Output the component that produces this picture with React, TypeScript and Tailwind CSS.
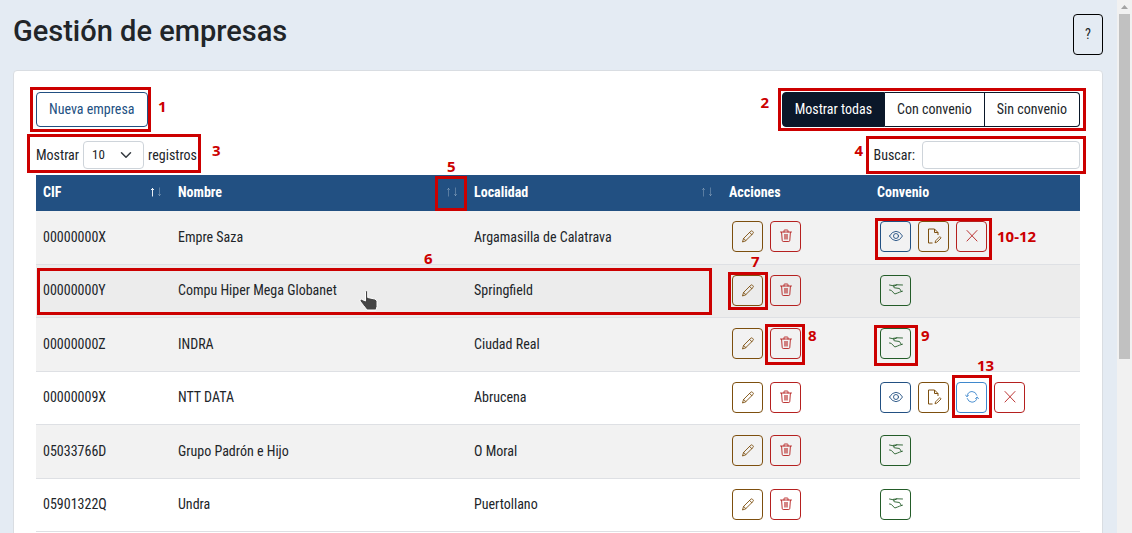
import type { ReactNode } from "react";

type IconProps = { children: ReactNode };

function Icon({ children }: IconProps) {
  return (
    <svg
      viewBox="0 0 14 14"
      className="h-[14px] w-[14px]"
      fill="none"
      stroke="currentColor"
      strokeWidth=".9"
      strokeLinecap="round"
      strokeLinejoin="round"
      aria-hidden="true"
    >
      {children}
    </svg>
  );
}

const PencilIcon = () => (
  <Icon>
    <path d="M1.600 12.600 2.600 9.400 9.800 2.200Q10.600 1.500 11.400 2.200L12.100 2.900Q12.800 3.700 12 4.500L4.800 11.600ZM8.600 3.400l2.200 2.300M2.600 9.400l2.200 2.200" />
  </Icon>
);

const TrashIcon = () => (
  <Icon>
    <path d="M1.500 3h11M5 3V1.700Q5 1 5.600 1h2.800q.6 0 .6.700V3M2.600 3.400l.6 8q.1 1.100 1 1.100h5.600q.9 0 1-1.100l.6-8" />
    <path d="M5 5h4v5.500H5Z" fill="currentColor" fillOpacity=".55" stroke="none" />
  </Icon>
);

const EyeIcon = () => (
  <Icon>
    <path d="M.5 7Q3.200 2.300 7 2.300t6.500 4.700Q10.800 11.700 7 11.700T.5 7Z" />
    <circle cx="7" cy="7" r="2.500" />
  </Icon>
);

const FileIcon = () => (
  <svg viewBox="0 0 16 16" className="h-4 w-4" fill="none" stroke="currentColor" aria-hidden="true">
    <path d="M6.500 15H2.500V1H8.500l3.500 3.500V7M8.500 1v3.500H12" />
    <path d="M9 14.800l.6-2 4.200-4.200 1.300 1.300-4.200 4.200Z" strokeWidth=".9" />
  </svg>
);

const CloseIcon = () => (
  <Icon>
    <path d="m2 1.500 10 10.500M12 1.500 2 12" />
  </Icon>
);

const HandshakeIcon = () => (
  <Icon>
    <path d="M.5 2 4.800 2.900M4.500 2.300 8 1.800 13.500 2M7.800 1.800 4.500 3.600Q4.800 5.300 7 5L10.500 5.500 12.300 8.300M.5 7 2.200 7.300 5.800 11 8.500 10 10.500 9.200 13.500 8.200" />
  </Icon>
);

const RefreshIcon = () => (
  <Icon>
    <path d="M2 6.200Q2.500 1.800 7 1.500q3.700.1 4.800 3.700M12.200 7.500Q11.500 12 7 12.200 3.300 12 2.200 8.500M.5 5.200l1.500 1.500 1.600-1.500M10.500 8.500l1.600-1.500 1.500 1.500" />
  </Icon>
);

const iconButton = "flex h-[31px] w-[31px] items-center justify-center rounded border pb-px";

const kinds = {
  edit: { label: "Editar", tone: "border-[#7d4f0e] text-[#7d4f0e]", icon: <PencilIcon /> },
  remove: { label: "Eliminar", tone: "border-[#b5201f] text-[#b5201f]", icon: <TrashIcon /> },
  view: { label: "Ver convenio", tone: "border-[#225082] text-[#225082]", icon: <EyeIcon /> },
  file: { label: "Editar convenio", tone: "border-[#7d4f0e] text-[#7d4f0e]", icon: <FileIcon /> },
  cancel: { label: "Eliminar convenio", tone: "border-[#b5201f] text-[#b5201f]", icon: <CloseIcon /> },
  sign: { label: "Nuevo convenio", tone: "border-[#235c28] text-[#235c28]", icon: <HandshakeIcon /> },
  renew: { label: "Renovar convenio", tone: "border-[#3f88cd] text-[#3f88cd]", icon: <RefreshIcon /> },
};

type Kind = keyof typeof kinds;

function Actions({ items }: { items: Kind[] }) {
  return (
    <div className="flex gap-[7px] pl-[3px]">
      {items.map((k) => (
        <button key={k} type="button" aria-label={kinds[k].label} className={`${iconButton} ${kinds[k].tone}`}>
          {kinds[k].icon}
        </button>
      ))}
    </div>
  );
}

const companies: { cif: string; name: string; town: string; bg: string; deal: Kind[] }[] = [
  { cif: "00000000X", name: "Empre Saza", town: "Argamasilla de Calatrava", bg: "bg-[#f2f2f2]", deal: ["view", "file", "cancel"] },
  { cif: "00000000Y", name: "Compu Hiper Mega Globanet", town: "Springfield", bg: "bg-[#ececec]", deal: ["sign"] },
  { cif: "00000000Z", name: "INDRA", town: "Ciudad Real", bg: "bg-[#f2f2f2]", deal: ["sign"] },
  { cif: "00000009X", name: "NTT DATA", town: "Abrucena", bg: "bg-white", deal: ["view", "file", "renew", "cancel"] },
  { cif: "05033766D", name: "Grupo Padrón e Hijo", town: "O Moral", bg: "bg-[#f2f2f2]", deal: ["sign"] },
  { cif: "05901322Q", name: "Undra", town: "Puertollano", bg: "bg-white", deal: ["sign"] },
];

function SortHeader({ label, active = false }: { label: string; active?: boolean }) {
  return (
    <th className="px-[7px] pb-[3px] font-bold">
      <button type="button" className="flex w-full items-center justify-between">
        {label}
        <svg viewBox="0 0 14 10" className="h-[10px] w-[14px]" fill="none" stroke="currentColor" aria-hidden="true">
          <path d="M2.500 9.500V1M1 3l1.500-1.500L4 3" opacity={active ? 0.9 : 0.25} />
          <path d="M9.500.5V9M8 7l1.500 1.500L11 7" opacity=".25" />
        </svg>
      </button>
    </th>
  );
}

const boxes = [
  "left-[30px] top-[87px] h-[45px] w-[121px]",
  "right-[31px] top-[88px] h-[43px] w-[308px]",
  "left-[27px] top-[134px] h-[39px] w-[174px]",
  "right-[31px] top-[136px] h-[38px] w-[220px]",
  "left-[435px] top-[176px] h-[35px] w-[32px]",
  "left-[37px] top-[268px] h-[47px] w-[675px]",
  "left-[728px] top-[272px] h-[38px] w-[40px]",
  "left-[765px] top-[324px] h-[41px] w-[40px]",
  "left-[874px] top-[325px] h-[41px] w-[44px]",
  "left-[875px] top-[218px] h-[42px] w-[117px]",
  "left-[952px] top-[375px] h-[43px] w-[40px]",
];

const marks = [
  { text: "1", at: "left-[158px] top-[96px]" },
  { text: "2", at: "right-[348px] top-[92px]" },
  { text: "3", at: "left-[212px] top-[140px]" },
  { text: "4", at: "right-[254px] top-[140px]" },
  { text: "5", at: "left-[447px] top-[156px]" },
  { text: "6", at: "left-[424px] top-[248px]" },
  { text: "7", at: "left-[751px] top-[251px]" },
  { text: "8", at: "left-[808px] top-[325px]" },
  { text: "9", at: "left-[921px] top-[325px]" },
  { text: "10-12", at: "left-[997px] top-[226px]" },
  { text: "13", at: "left-[977px] top-[355px]" },
];

function Annotations() {
  return (
    <div className="pointer-events-none absolute inset-0">
      {boxes.map((b) => (
        <span key={b} className={`absolute border-3 border-[#cc0000] ${b}`} />
      ))}
      {marks.map((m) => (
        <span
          key={m.text}
          className={`absolute font-['Noto_Sans',sans-serif] text-[15px] leading-5 font-bold text-[#cc0000] ${m.at}`}
        >
          {m.text}
        </span>
      ))}
      <svg viewBox="0 0 20 24" className="absolute top-[289px] left-[359px] h-6 w-5" aria-hidden="true">
        <path
          d="M6.500 2.500Q7.500 1 8.700 2.500V8.500l7 1.500q2.300.6 2.300 2.600v5l-1 3.400H8L4.500 16.500 1 12q-.5-2 1.500-1.800l4 1.800Z"
          fill="#454545"
          stroke="#ffffff"
          strokeWidth="1"
          strokeLinejoin="round"
        />
      </svg>
    </div>
  );
}

const filterButton = "border-y border-r border-[#0a1729] px-3 pb-px";

const cell = "border-b border-[#dee0e4] px-[7px] pb-[2px]";

export default function App() {
  return (
    <div className="flex h-screen overflow-hidden bg-[#e4ebf3] font-['Roboto_Condensed','Liberation_Sans_Narrow',Roboto,sans-serif] text-sm leading-6 text-[#212529]">
      <main className="relative min-w-0 flex-1 px-[13px] pr-[14px]">
        <header className="flex h-[70px] items-start justify-between">
          <h1 className="mt-[13px] font-['Roboto',sans-serif] text-[29px] leading-9 font-medium">Gestión de empresas</h1>
          <button type="button" className="mt-[14px] h-[41px] w-[30px] rounded border border-black pb-[2px]">
            ?
          </button>
        </header>

        <section className="rounded border border-[#d9dde2] bg-white px-[22px] pt-[21px] pb-6">
          <div className="flex items-center justify-between">
            <button type="button" className="h-[35px] rounded border border-[#225082] px-3 pb-px text-[#225082]">
              Nueva empresa
            </button>
            <div className="flex h-[35px]" role="group" aria-label="Filtro">
              <button type="button" className="rounded-l border border-[#0a1729] bg-[#0a1729] px-3 pb-px text-white">
                Mostrar todas
              </button>
              <button type="button" className={filterButton}>Con convenio</button>
              <button type="button" className={`${filterButton} rounded-r`}>Sin convenio</button>
            </div>
          </div>

          <div className="flex h-12 items-center justify-between pt-[7px] pb-[13px]">
            <label className="mt-[14px] flex items-center gap-1">
              Mostrar
              <span className="relative flex">
                <select className="h-7 w-[61px] appearance-none rounded border border-[#ced4da] bg-white pl-2 text-[13px]">
                  <option>10</option>
                  <option>25</option>
                  <option>50</option>
                </select>
                <svg
                  viewBox="0 0 16 16"
                  className="pointer-events-none absolute top-2 right-3 h-3 w-3"
                  fill="none"
                  stroke="#343a40"
                  strokeWidth="2"
                  strokeLinecap="round"
                  strokeLinejoin="round"
                  aria-hidden="true"
                >
                  <path d="m2 5 6 6 6-6" />
                </svg>
              </span>
              registros
            </label>
            <label className="mt-[14px] flex items-center gap-[7px]">
              Buscar:
              <input type="search" className="h-7 w-[158px] rounded border border-[#ced4da] bg-white px-2 text-[13px]" />
            </label>
          </div>

          <table className="w-full table-fixed border-separate border-spacing-0 text-left">
            <colgroup>
              <col className="w-[135px]" />
              <col className="w-[296px]" />
              <col className="w-[255px]" />
              <col className="w-[148px]" />
              <col />
            </colgroup>
            <thead className="bg-[#225082] text-white">
              <tr className="h-9">
                <SortHeader label="CIF" active />
                <SortHeader label="Nombre" />
                <SortHeader label="Localidad" />
                <th className="px-[7px] pb-[3px] font-bold">Acciones</th>
                <th className="px-[7px] pb-[3px] font-bold">Convenio</th>
              </tr>
            </thead>
            <tbody>
              {companies.map((c) => (
                <tr key={c.cif} className={`odd:h-[54px] even:h-[53px] ${c.bg}`}>
                  <td className={cell}>{c.cif}</td>
                  <td className={cell}>{c.name}</td>
                  <td className={cell}>{c.town}</td>
                  <td className={cell}><Actions items={["edit", "remove"]} /></td>
                  <td className={cell}><Actions items={c.deal} /></td>
                </tr>
              ))}
            </tbody>
          </table>
        </section>
        <Annotations />
      </main>

      <div className="flex w-[15px] flex-col items-center bg-[#f1f1f1]" aria-hidden="true">
        <svg viewBox="0 0 15 14" className="h-[14px] w-[15px]" fill="#a3a3a3">
          <path d="M4 9 7.500 5 11 9Z" />
        </svg>
        <div className="h-[345px] w-[11px] bg-[#c1c1c1]" />
      </div>
    </div>
  );
}
